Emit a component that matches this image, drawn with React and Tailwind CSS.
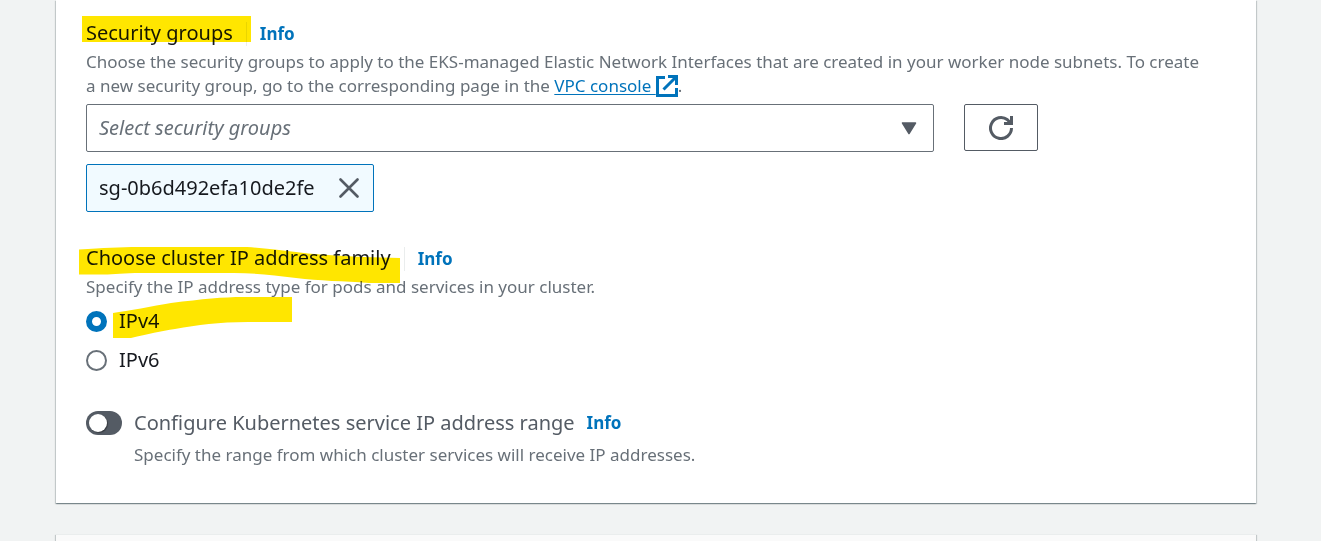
import { useState } from "react";

const shadow =
  "shadow-[0_1px_1px_0_rgba(0,28,36,0.3),1px_1px_1px_0_rgba(0,28,36,0.15),-1px_1px_1px_0_rgba(0,28,36,0.15)]";

function Info({ label }) {
  return (
    <span className="ml-[13px] flex h-6 items-center border-l border-[#eaeded] pl-[13px]">
      <a href="#info" aria-label={label} className="text-[17px] leading-6 font-bold text-[#0073bb]">
        Info
      </a>
    </span>
  );
}

function ExternalIcon() {
  return (
    <svg viewBox="0 0 22 22" className="inline-block size-[22px] align-[-5px]" fill="none" stroke="#0073bb" strokeWidth="3" aria-hidden="true">
      <path d="M9 2.5H1.5V20.5H20.5V13" />
      <path d="M12 1.5H20.5V10M20 2L7.5 14.5" />
    </svg>
  );
}

function RefreshIcon() {
  return (
    <svg viewBox="0 0 24 24" className="size-6" fill="none" stroke="#545b64" strokeWidth="3" aria-hidden="true">
      <path d="M22.5 12A10.500 10.500 0 1 1 18.500 3.800L21.500 7" />
      <path d="M22.5 0V7.500H15" />
      <path d="M18 7L22 3V7Z" fill="#545b64" stroke="none" />
    </svg>
  );
}

function Marker({ className, viewBox, d }) {
  return (
    <svg viewBox={viewBox} className={className} aria-hidden="true">
      <path d={d} fill="#ffe600" />
    </svg>
  );
}

function SecurityGroups() {
  return (
    <section>
      <div className="relative flex items-baseline">
        <label htmlFor="groups" className="text-xl leading-[26px] text-[#16191f]">
          Security groups
        </label>
        <Info label="Info about security groups" />
        <Marker
          className="pointer-events-none absolute -top-1 -left-1 h-[26px] w-[169px] mix-blend-multiply"
          viewBox="0 0 169 26"
          d="M0 0H169V26H0Z"
        />
      </div>
      <p className="mt-1 text-[17px] leading-6 text-[#687078]">
        Choose the security groups to apply to the EKS-managed Elastic Network Interfaces that are created in your worker node subnets. To create
        a{"\u00a0"}new security group, go to the corresponding page in the{" "}
        <a href="#vpc" className="whitespace-nowrap text-[#0073bb] underline underline-offset-2">
          VPC console <ExternalIcon />
        </a>
        .
      </p>
      <div className="mt-1.5 flex items-start gap-[30px]">
        <div className="relative w-[848px]">
          <select
            id="groups"
            defaultValue=""
            className="h-12 w-full appearance-none rounded-xs border border-[#687078] bg-white px-3 text-xl text-[#687078] italic"
          >
            <option value="">Select security groups</option>
          </select>
          <svg viewBox="0 0 16 13" className="pointer-events-none absolute top-[18px] right-[17px] h-[13px] w-4" aria-hidden="true">
            <path d="M1.5 1H14.5L8 11.5Z" fill="#545b64" stroke="#545b64" strokeWidth="1.5" strokeLinejoin="round" />
          </svg>
        </div>
        <button type="button" aria-label="Refresh security groups" className="flex h-[47px] w-[74px] items-center justify-center rounded-xs border border-[#545b64] bg-white">
          <RefreshIcon />
        </button>
      </div>
      <div className="mt-3 flex">
        <div className="flex h-12 w-72 items-center justify-between rounded-xs border border-[#0073bb] bg-[#f1faff] pr-3.5 pl-3">
          <span className="text-xl text-[#16191f]">sg-0b6d492efa10de2fe</span>
          <button type="button" aria-label="Remove sg-0b6d492efa10de2fe">
            <svg viewBox="0 0 20 20" className="size-5" stroke="#545b64" strokeWidth="2.6" strokeLinecap="round" aria-hidden="true">
              <path d="M1.5 1.5L18.5 18.5M18.5 1.5L1.5 18.5" />
            </svg>
          </button>
        </div>
      </div>
    </section>
  );
}

function AddressFamily() {
  const [family, setFamily] = useState("IPv4");
  return (
    <fieldset className="relative mt-[33px]">
      <div className="flex items-baseline">
        <span id="family" className="text-xl leading-[26px] text-[#16191f]">
          Choose cluster IP address family
        </span>
        <Info label="Info about the IP address family" />
      </div>
      <p className="mt-1 text-[17px] leading-6 text-[#687078]">Specify the IP address type for pods and services in your cluster.</p>
      <div role="radiogroup" aria-labelledby="family" className="mt-2 flex flex-col items-start gap-[11px]">
        {["IPv4", "IPv6"].map((name) => (
          <label key={name} className="flex items-center gap-3 text-xl leading-7 text-[#16191f]">
            <input
              type="radio"
              name="family"
              checked={family === name}
              onChange={() => setFamily(name)}
              className="size-[21px] appearance-none rounded-full border-2 border-[#687078] bg-white checked:border-[6px] checked:border-[#0073bb]"
            />
            {name}
          </label>
        ))}
      </div>
      <Marker
        className="pointer-events-none absolute top-0.5 -left-[7px] h-9 w-[322px] mix-blend-multiply"
        viewBox="0 0 322 36"
        d="M0 2.5C25 1 40 0 60 0H168C185 1 200 3 217 5C240 8 265 9 285 10L321 11V36H290C265 34 240 34 217 31C195 28 175 26 155 26H62C45 26 35 27.5 25 27.5H0Z"
      />
      <Marker
        className="pointer-events-none absolute top-[52px] left-[27px] h-[42px] w-[179px] mix-blend-multiply"
        viewBox="0 0 179 42"
        d="M0 16C15 14 40 9 58 6C90 2 110 0 130 0H179V25H135C105 25 85 28 62 32C48 34 35 37 18 41H0Z"
      />
    </fieldset>
  );
}

function ServiceRange() {
  return (
    <section className="mt-[35px]">
      <div className="flex items-center">
        <label className="flex items-center gap-3 text-xl leading-7 text-[#545b64]">
          <input
            type="checkbox"
            role="switch"
            className="flex h-6 w-9 appearance-none items-center rounded-full bg-[#545b64] px-[3px] before:size-[18px] before:rounded-full before:bg-white before:shadow-[1px_1px_1px_rgba(0,0,0,0.35)] checked:justify-end checked:bg-[#0073bb]"
          />
          <span>Configure Kubernetes service IP address range</span>
        </label>
        <a href="#info" aria-label="Info about the service IP address range" className="ml-3 text-[17px] leading-6 font-bold text-[#0073bb]">
          Info
        </a>
      </div>
      <p className="mt-1.5 pl-12 text-[17px] leading-6 text-[#687078]">
        Specify the range from which cluster services will receive IP addresses.
      </p>
    </section>
  );
}

export default function App() {
  return (
    <div className="h-screen overflow-hidden bg-[#f1f3f3] pr-[65px] pl-14 font-['Noto_Sans',sans-serif]">
      <main className={"bg-white px-[30px] pt-5 pb-9 " + shadow}>
        <SecurityGroups />
        <AddressFamily />
        <ServiceRange />
      </main>
      <div className={"mt-[31px] h-12 border-t border-[#eaeded] bg-[#fafafa] " + shadow} />
    </div>
  );
}
